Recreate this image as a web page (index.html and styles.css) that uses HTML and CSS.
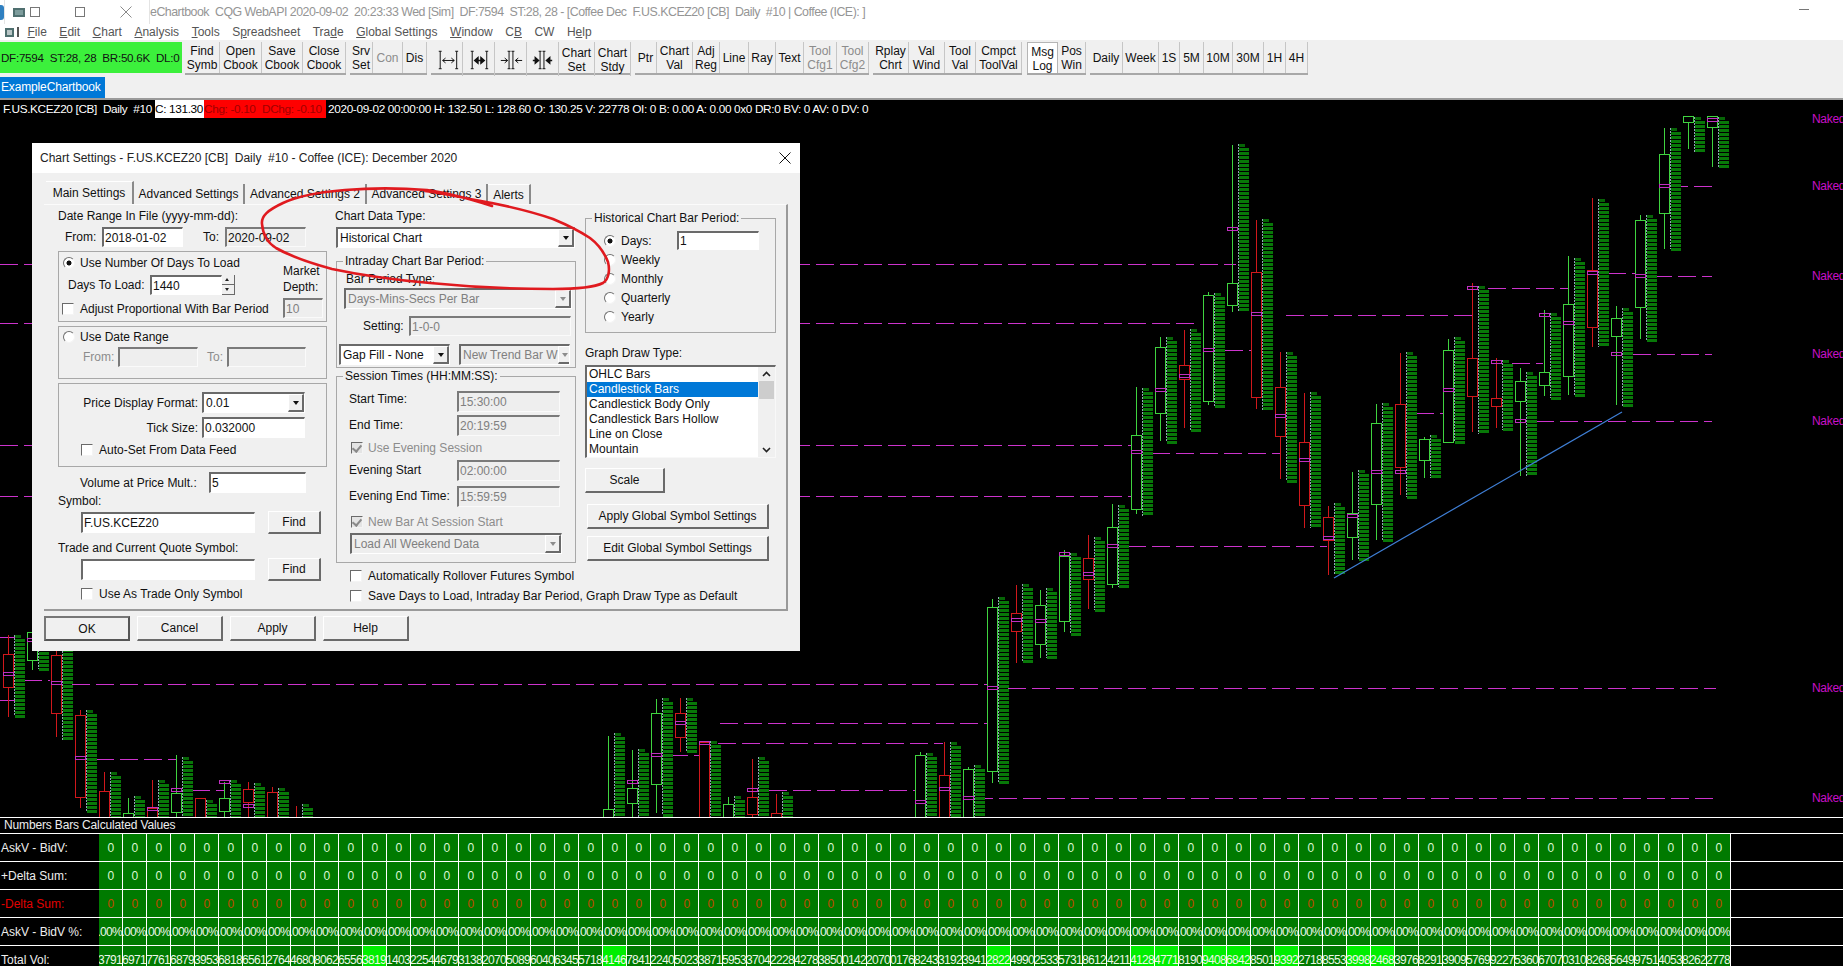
FILE: index.html
```html
<!DOCTYPE html>
<html lang="en">
<head>
  <meta charset="UTF-8" />
  <title>Sierra Chart - ExampleChartbook</title>
  <link rel="stylesheet" href="styles.css">
</head>
<body>
  <div class="titlebar">
    <div class="app-icon"></div>
    <div class="win-controls">
      <span class="mini-icon"></span>
      <span class="restore-glyph"></span>
      <span class="max-glyph"></span>
      <svg class="close-glyph" width="12" height="12" viewBox="0 0 12 12"><path d="M0.5 0.5L11.5 11.5M11.5 0.5L0.5 11.5" stroke="#8a8a8a" fill="none"/></svg>
    </div>
    <div class="title-text">eChartbook  CQG WebAPI 2020-09-02  20:23:33 Wed [Sim]  DF:7594  ST:28, 28 - [Coffee Dec  F.US.KCEZ20 [CB]  Daily  #10 | Coffee (ICE): ]</div>
    <span class="min-glyph"></span>
  </div>

  <div class="menubar">
    <svg class="menu-icon" width="16" height="11" viewBox="0 0 16 11"><rect x="0" y="1" width="9" height="9" fill="#4f6f6f"/><rect x="2" y="3" width="5" height="5" fill="#b9c6c6"/><rect x="12" y="0" width="2" height="10" fill="#555"/></svg>
    <span class="menu-item"><u>F</u>ile</span>
    <span class="menu-item"><u>E</u>dit</span>
    <span class="menu-item"><u>C</u>hart</span>
    <span class="menu-item"><u>A</u>nalysis</span>
    <span class="menu-item"><u>T</u>ools</span>
    <span class="menu-item">S<u>p</u>readsheet</span>
    <span class="menu-item">Tra<u>d</u>e</span>
    <span class="menu-item"><u>G</u>lobal Settings</span>
    <span class="menu-item"><u>W</u>indow</span>
    <span class="menu-item">C<u>B</u></span>
    <span class="menu-item">CW</span>
    <span class="menu-item">H<u>e</u>lp</span>
  </div>

  <div class="toolbar">
    <div class="status-box">DF:7594  ST:28, 28  BR:50.6K  DL:0</div>
    <div class="tool-group tg-file">
      <div class="tool">Find<br>Symb</div><div class="tool">Open<br>Cbook</div><div class="tool">Save<br>Cbook</div><div class="tool">Close<br>Cbook</div>
    </div>
    <div class="tool-group tg-server">
      <div class="tool">Srv<br>Set</div><div class="tool off">Con</div><div class="tool">Dis</div>
    </div>
    <div class="tool-group tg-chart">
      <div class="tool">
        <svg width="32" height="33" viewBox="0 0 32 33"><path d="M9.5 8V26M26.5 8V26M8 8H11M8 26H11M25 8H28M25 26H28M12 17.5H24M12 17.5L15 15M12 17.5L15 20M24 17.5L21 15M24 17.5L21 20" stroke="#111" fill="none"/></svg>
      </div>
      <div class="tool">
        <svg width="32" height="33" viewBox="0 0 32 33"><path d="M9.5 8V26M24.5 8V26M8 8H11M8 26H11M23 8H26M23 26H26" stroke="#111" fill="none"/><path d="M12 17.5H22M12 17.5L15.5 14.5V20.5ZM22 17.5L18.5 14.5V20.5Z" stroke="#111" stroke-width="1.4" fill="#111"/></svg>
      </div>
      <div class="tool">
        <svg width="32" height="33" viewBox="0 0 32 33"><path d="M14.5 8V26M18.5 8V26M13 8H16M13 26H16M17 8H20M17 26H20M6 17.5H13M13 17.5L10 15M13 17.5L10 20M28 17.5H21M21 17.5L24 15M21 17.5L24 20" stroke="#111" fill="none"/></svg>
      </div>
      <div class="tool">
        <svg width="32" height="33" viewBox="0 0 32 33"><path d="M13.5 8V26M17.5 8V26M12 8H15M12 26H15M16 8H19M16 26H19" stroke="#111" fill="none"/><path d="M6 17.5H12M12 17.5L8.5 14.5V20.5ZM26 17.5H20M20 17.5L23.5 14.5V20.5Z" stroke="#111" stroke-width="1.4" fill="#111"/></svg>
      </div>
      <div class="tool">Chart<br>Set</div><div class="tool">Chart<br>Stdy</div>
    </div>
    <div class="tool-group tg-draw">
      <div class="tool">Ptr</div><div class="tool">Chart<br>Val</div><div class="tool">Adj<br>Reg</div><div class="tool">Line</div><div class="tool">Ray</div><div class="tool">Text</div><div class="tool off">Tool<br>Cfg1</div><div class="tool off">Tool<br>Cfg2</div>
    </div>
    <div class="tool-group tg-replay">
      <div class="tool">Rplay<br>Chrt</div><div class="tool">Val<br>Wind</div><div class="tool">Tool<br>Val</div><div class="tool">Cmpct<br>ToolVal</div>
    </div>
    <div class="tool-group tg-log">
      <div class="tool pressed">Msg<br>Log</div><div class="tool">Pos<br>Win</div>
    </div>
    <div class="tool-group tg-period">
      <div class="tool">Daily</div><div class="tool">Week</div><div class="tool">1S</div><div class="tool">5M</div><div class="tool">10M</div><div class="tool">30M</div><div class="tool">1H</div><div class="tool">4H</div>
    </div>
  </div>

  <div class="tabstrip"><span class="book-tab">ExampleChartbook</span></div>

  <div class="chart-header">
    <span class="hdr-name">F.US.KCEZ20 [CB]  Daily  #10</span><span class="hdr-close">C: 131.30</span><span class="hdr-chg">Chg: -0.10</span><span class="hdr-dchg">DChg: -0.10</span><span class="hdr-rest">2020-09-02 00:00:00 H: 132.50 L: 128.60 O: 130.25 V: 22778 OI: 0 B: 0.00 A: 0.00 0x0 DR:0 BV: 0 AV: 0 DV: 0</span>
  </div>

  <div class="chart-area">
    <svg id="chart" class="chart-svg" width="1843" height="699" viewBox="0 118 1843 699"></svg>

    <div class="dialog">
      <div class="dlg-title">
        <span class="dlg-caption">Chart Settings - F.US.KCEZ20 [CB]  Daily  #10 - Coffee (ICE): December 2020</span>
        <svg width="12" height="12" viewBox="0 0 12 12"><path d="M0.5 0.5L11.5 11.5M11.5 0.5L0.5 11.5" stroke="#111" fill="none"/></svg>
      </div>

      <div class="dlg-tabs">
        <span class="dlg-tab active">Main Settings</span>
        <span class="dlg-tab t2">Advanced Settings</span>
        <span class="dlg-tab t3">Advanced Settings 2</span>
        <span class="dlg-tab t4">Advanced Settings 3</span>
        <span class="dlg-tab t5">Alerts</span>
      </div>

      <div class="pane">
        <!-- left column -->
        <div class="col">
          <div class="label-row">Date Range In File (yyyy-mm-dd):</div>
          <div class="row r20 mt1">
            <span class="lb-from">From:</span><input class="field w81" value="2018-01-02">
            <span class="lb-to">To:</span><input class="field w81 readonly" value="2020-09-02">
          </div>

          <div class="box box-days">
            <div class="days-main">
              <div class="row r22 ind4"><span class="radio on"></span><span>Use Number Of Days To Load</span></div>
              <div class="row r20 mt1">
                <span class="lb-days">Days To Load:</span><input class="field w72" value="1440"><span class="spin"><i class="up"></i><i class="down"></i></span>
              </div>
              <div class="row r25 ind3 pt2"><span class="check"></span><span>Adjust Proportional With Bar Period</span></div>
            </div>
            <div class="depth">
              <div class="depth-label">Market<br>Depth:</div>
              <input class="field w40 dis" value="10">
            </div>
          </div>

          <div class="box box-range">
            <div class="row r20 ind4"><span class="radio"></span><span>Use Date Range</span></div>
            <div class="row r20">
              <span class="lb-from2 gray">From:</span><input class="field w80 dis">
              <span class="lb-to2 gray">To:</span><input class="field w79 dis">
            </div>
          </div>

          <div class="box box-price">
            <div class="row r21 mt8"><span class="lb-right">Price Display Format:</span><div class="combo w103"><span>0.01</span><b class="arrow"></b></div></div>
            <div class="row r21 mt4"><span class="lb-right">Tick Size:</span><input class="field w103" value="0.032000"></div>
            <div class="row r20 mt2 ind22"><span class="check"></span><span>Auto-Set From Data Feed</span></div>
          </div>

          <div class="row r21 mt5"><span class="lb-mult">Volume at Price Mult.:</span><input class="field w97" value="5"></div>
          <div class="label-sm">Symbol:</div>
          <div class="row r21 mt3 ind23"><input class="field w174" value="F.US.KCEZ20"><button class="btn btn-find">Find</button></div>
          <div class="label-sm mt7">Trade and Current Quote Symbol:</div>
          <div class="row r21 mt3 ind23"><input class="field w174"><button class="btn btn-find">Find</button></div>
          <div class="row r20 mt4 ind23"><span class="check"></span><span>Use As Trade Only Symbol</span></div>
        </div>

        <!-- middle column -->
        <div class="col">
          <div class="label-row">Chart Data Type:</div>
          <div class="combo w239 mt1 ml1 h20"><span>Historical Chart</span><b class="arrow"></b></div>

          <fieldset class="group group-intraday">
            <legend>Intraday Chart Bar Period:</legend>
            <div class="label-sm mt2 ind9">Bar Period Type:</div>
            <div class="combo dis w228 h20 mt1 ml7"><span>Days-Mins-Secs Per Bar</span><b class="arrow"></b></div>
            <div class="row r20 mt7"><span class="lb-setting">Setting:</span><input class="field w162 dis" value="1-0-0"></div>
            <div class="row r21 mt8">
              <div class="combo w111 ml2"><span>Gap Fill - None</span><b class="arrow"></b></div>
              <div class="combo dis w111 ml9"><span>New Trend Bar W</span><b class="arrow"></b></div>
            </div>
          </fieldset>

          <fieldset class="group group-session">
            <legend>Session Times (HH:MM:SS):</legend>
            <div class="row r21 mt7"><span class="lb-time lb-up">Start Time:</span><input class="field w103 dis" value="15:30:00"></div>
            <div class="row r22 mt2"><span class="lb-time">End Time:</span><input class="field w103 dis" value="20:19:59"></div>
            <div class="row r20 mt2 ind14 gray"><span class="check mark dis"></span><span>Use Evening Session</span></div>
            <div class="row r22 mt1"><span class="lb-time">Evening Start</span><input class="field w103 dis" value="02:00:00"></div>
            <div class="row r22 mt4"><span class="lb-time">Evening End Time:</span><input class="field w103 dis" value="15:59:59"></div>
            <div class="row r20 mt5 ind14 gray"><span class="check mark dis"></span><span>New Bar At Session Start</span></div>
            <div class="combo dis w212 h21 mt1 ml13"><span>Load All Weekend Data</span><b class="arrow"></b></div>
          </fieldset>

          <div class="row r20 mt3 ind15"><span class="check"></span><span>Automatically Rollover Futures Symbol</span></div>
          <div class="row r19 ind15"><span class="check"></span><span class="nowrap">Save Days to Load, Intraday Bar Period, Graph Draw Type as Default</span></div>
        </div>

        <!-- right column -->
        <div class="col">
          <fieldset class="group group-hist">
            <legend>Historical Chart Bar Period:</legend>
            <div class="hist-list">
              <div class="row r19"><span class="radio on"></span><span class="lb-days-radio">Days:</span><input class="field w82" value="1"></div>
              <div class="row r19"><span class="radio"></span><span>Weekly</span></div>
              <div class="row r19"><span class="radio"></span><span>Monthly</span></div>
              <div class="row r19"><span class="radio"></span><span>Quarterly</span></div>
              <div class="row r19"><span class="radio"></span><span>Yearly</span></div>
            </div>
          </fieldset>
          <div class="label-sm mt12">Graph Draw Type:</div>
          <div class="listbox">
            <div class="list-items">
              <div class="list-item">OHLC Bars</div>
              <div class="list-item sel">Candlestick Bars</div>
              <div class="list-item">Candlestick Body Only</div>
              <div class="list-item">Candlestick Bars Hollow</div>
              <div class="list-item">Line on Close</div>
              <div class="list-item">Mountain</div>
            </div>
            <div class="scroll">
              <svg width="17" height="14" viewBox="0 0 17 14"><path d="M5 9L8.5 5.5L12 9" stroke="#222" stroke-width="1.6" fill="none"/></svg>
              <span class="thumb"></span>
              <svg class="scroll-down" width="17" height="14" viewBox="0 0 17 14"><path d="M5 5L8.5 8.5L12 5" stroke="#222" stroke-width="1.6" fill="none"/></svg>
            </div>
          </div>
          <button class="btn btn-scale">Scale</button>
          <button class="btn btn-global mt11">Apply Global Symbol Settings</button>
          <button class="btn btn-global mt7">Edit Global Symbol Settings</button>
        </div>
      </div>

      <div class="dlg-buttons">
        <button class="btn btn-dlg default">OK</button>
        <button class="btn btn-dlg">Cancel</button>
        <button class="btn btn-dlg">Apply</button>
        <button class="btn btn-dlg">Help</button>
      </div>

      <!-- hand drawn circle on top of the dialog -->
      <svg class="scribble" width="768" height="508" viewBox="32 143 768 508">
        <path d="M492 206C470 199 450 193 427 190C400 188 370 188 345 190C320 192 298 196 283 203C268 210 261 216 262 224C263 236 268 243 276 248C290 256 310 263 332 269C365 276 395 280 430 283C470 287 515 289 553 289C575 289 595 287 603 283C609 279 610 270 608 262C604 252 598 244 590 238C578 230 565 224 553 219C530 211 505 205 470 199C455 196 440 193 425 191" stroke="#e01a1f" stroke-width="2.6" fill="none" stroke-linecap="round"/>
      </svg>
    </div>
  </div>

  <div class="numbers-panel">
    <div class="panel-title">Numbers Bars Calculated Values</div>
    <div id="numbers"></div>
  </div>

  <script src="chart.js"></script>
</body>
</html>
```

FILE: styles.css
```css
* {
  box-sizing: border-box;
}

html, body {
  margin: 0;
  padding: 0;
}

body {
  width: 1843px;
  height: 966px;
  overflow: hidden;
  background: #000;
  font-family: "Liberation Sans", Arial, sans-serif;
  font-size: 12px;
  color: #111;
}

/* window chrome */
.titlebar {
  height: 24px;
  background: #fff;
  display: flex;
  align-items: center;
}

.app-icon {
  width: 4px;
  height: 15px;
  background: #2f7fc0;
  border-radius: 0 3px 3px 0;
}

.win-controls {
  width: 146px;
  height: 24px;
  border-right: 1px solid #e4e4e4;
  border-left: 1px solid #e4e4e4;
  display: flex;
  align-items: center;
  padding-left: 8px;
  flex: none;
}

.mini-icon {
  width: 12px;
  height: 9px;
  background: #7d9c9c;
  border: 2px solid #4f6f6f;
}

.restore-glyph {
  width: 10px;
  height: 10px;
  border: 1px solid #777;
  margin-left: 5px;
}

.max-glyph {
  width: 10px;
  height: 10px;
  border: 1px solid #777;
  margin-left: 35px;
}

.close-glyph {
  margin-left: 35px;
}

.title-text {
  color: #959595;
  font-size: 12.4px;
  letter-spacing: -0.5px;
  white-space: pre;
}

.min-glyph {
  width: 10px;
  height: 1px;
  background: #777;
  margin-left: auto;
  margin-right: 34px;
  margin-top: -6px;
}

.menubar {
  height: 16px;
  background: #fff;
  display: flex;
  align-items: center;
  gap: 12.5px;
  padding-left: 5px;
  color: #555;
}

.menu-icon {
  margin-right: -6px;
}

/* toolbar */
.toolbar {
  height: 36px;
  background: #f0f0f0;
  display: flex;
  align-items: flex-start;
  padding-top: 2px;
}

.status-box {
  width: 182px;
  height: 31px;
  background: #3cf03c;
  color: #111;
  line-height: 31px;
  padding-left: 1px;
  margin-right: 3px;
  font-size: 11.6px;
  letter-spacing: -0.25px;
  white-space: pre;
  overflow: hidden;
}

.tool-group {
  display: grid;
  height: 33px;
  margin-right: 4px;
  border-bottom: 2px solid #a8a8a8;
}

.tg-file { grid-template-columns: 35px 42px 41px 43px; }
.tg-server { grid-template-columns: 23px 30px 24px; }
.tg-chart { grid-template-columns: 32px 32px 32px 32px 36px 36px; }
.tg-draw { grid-template-columns: 22px 36px 27px 29px 27px 28px 33px 32px; }
.tg-replay { grid-template-columns: 36px 36px 31px 46px; margin-right: 5px; }
.tg-log { grid-template-columns: 31px 28px; }
.tg-period { grid-template-columns: 33px 36px 21px 24px 29px 31px 22px 22px; }

.tool {
  display: flex;
  align-items: center;
  justify-content: center;
  text-align: center;
  line-height: 14px;
  padding-top: 1px;
  border-right: 1px solid #c6c6c6;
  white-space: nowrap;
}

.tool.off {
  color: #8c8c8c;
}

.tool.pressed {
  background: #fff;
  border: 1px solid #b5b5b5;
  border-bottom: none;
}

.tabstrip {
  height: 22px;
  background: #f0f0f0;
  padding-top: 1px;
}

.book-tab {
  display: inline-block;
  width: 105px;
  height: 21px;
  background: #0078d7;
  color: #fff;
  line-height: 21px;
  padding-left: 1px;
  font-size: 12px;
  letter-spacing: -0.15px;
  vertical-align: top;
}

.chart-header {
  height: 20px;
  border-top: 2px solid #9a9a9a;
  background: #000;
  color: #fff;
  display: flex;
  line-height: 18px;
  padding-left: 3px;
  font-size: 11.8px;
  letter-spacing: -0.35px;
  white-space: pre;
}

.hdr-name {
  width: 152px;
}

.hdr-close {
  width: 49px;
  background: #fff;
  color: #000;
}

.hdr-chg {
  width: 58px;
  background: #ff0000;
  color: #a00000;
}

.hdr-dchg {
  width: 64px;
  background: #ff0000;
  color: #a00000;
  margin-right: 2px;
}

/* chart */
.chart-area {
  position: relative;
  height: 699px;
  background: #000;
}

.chart-svg {
  display: block;
  overflow: visible;
}

/* numbers panel below the chart, it covers the bars that run past the chart bottom */
.numbers-panel {
  position: relative;
  background: #000;
  border-top: 1px solid #fff;
  color: #eee;
  font-size: 12px;
}

.panel-title {
  height: 15px;
  line-height: 15px;
  padding-left: 4px;
  letter-spacing: -0.15px;
}

.num-row {
  height: 28px;
  border-top: 1px solid #fff;
  display: flex;
}

.num-label {
  width: 99px;
  line-height: 28px;
  padding-left: 1px;
}

.num-label.neg {
  color: #e00000;
}

.num-cell {
  width: 24px;
  background: #007a00;
  border-right: 1px solid #fff;
  display: flex;
  justify-content: center;
  line-height: 28px;
  letter-spacing: -0.7px;
  overflow: hidden;
  color: #dcf7d2;
}

.num-cell.neg {
  color: #c04a00;
}

/* long values keep their right end, the left end is clipped */
.num-cell.long {
  justify-content: flex-end;
  color: #eef8ea;
}

.num-cell.hot {
  background: #00ee00;
}

/* dialog */
.dialog {
  position: absolute;
  left: 32px;
  top: 25px;
  width: 768px;
  height: 508px;
  background: #f0f0f0;
  display: flex;
  flex-direction: column;
  padding-left: 12px;
}

.dlg-title {
  height: 30px;
  margin-left: -12px;
  background: #fff;
  display: flex;
  align-items: center;
  justify-content: space-between;
  padding: 0 9px 0 8px;
  color: #222;
}

.dlg-caption {
  white-space: pre;
}

.dlg-tabs {
  height: 31px;
  display: flex;
  align-items: flex-end;
  padding-left: 2px;
}

.dlg-tab {
  height: 20px;
  line-height: 21px;
  border-right: 2px solid #8a8a8a;
  text-align: center;
  white-space: nowrap;
  overflow: hidden;
}

.dlg-tab.active {
  width: 88px;
  height: 23px;
  background: #f0f0f0;
  border-top: 1px solid #fff;
  line-height: 22px;
}

.t2 { width: 111px; }
.t3 { width: 122px; }
.t4 { width: 121px; }
.t5 { width: 43px; border-top: 1px solid #fff; }

.pane {
  width: 744px;
  height: 407px;
  border-right: 2px solid #9a9a9a;
  border-bottom: 2px solid #9a9a9a;
  border-top: 1px solid #fbfbfb;
  padding: 1px 0 0 14px;
  display: grid;
  grid-template-columns: 269px 241px 191px;
  column-gap: 8px;
}

.col {
  display: flex;
  flex-direction: column;
  align-items: flex-start;
}

.col:last-child {
  margin-left: 1px;
}

.label-row {
  height: 20px;
  line-height: 20px;
}

.label-sm {
  height: 16px;
  line-height: 16px;
}

.row {
  display: flex;
  align-items: center;
  flex: none;
}

.r19 { height: 19px; }
.r20 { height: 20px; }
.r21 { height: 21px; }
.r22 { height: 22px; }
.r25 { height: 25px; }

.h20 { height: 20px; }
.h21 { height: 21px; }

.mt1 { margin-top: 1px; }
.mt2 { margin-top: 2px; }
.mt3 { margin-top: 3px; }
.mt4 { margin-top: 4px; }
.mt5 { margin-top: 5px; }
.mt7 { margin-top: 7px; }
.mt8 { margin-top: 8px; }
.mt11 { margin-top: 11px; }
.mt12 { margin-top: 12px; }
.ml1 { margin-left: 1px; }
.ml2 { margin-left: 2px; }
.ml7 { margin-left: 7px; }
.ml9 { margin-left: 9px; }
.ml13 { margin-left: 13px; }
.pt2 { padding-top: 2px; }

.ind3 { padding-left: 3px; }
.ind4 { padding-left: 4px; }
.ind9 { padding-left: 9px; }
.ind14 { padding-left: 14px; }
.ind15 { padding-left: 15px; }
.ind22 { padding-left: 22px; }
.ind23 { padding-left: 23px; }

.w40 { width: 40px; }
.w72 { width: 72px; }
.w79 { width: 79px; }
.w80 { width: 80px; }
.w81 { width: 81px; }
.w82 { width: 82px; }
.w97 { width: 97px; }
.w103 { width: 103px; }
.w111 { width: 111px; }
.w162 { width: 162px; }
.w174 { width: 174px; }
.w212 { width: 212px; }
.w228 { width: 228px; }
.w239 { width: 239px; }

.gray {
  color: #8c8c8c;
}

.nowrap {
  white-space: nowrap;
}

/* win32 style controls */
.field {
  height: 100%;
  max-height: 21px;
  background: #fff;
  border-style: solid;
  border-width: 2px 1px 1px 2px;
  border-color: #6a6a6a #fff #fff #6a6a6a;
  padding: 0 0 0 1px;
  font: inherit;
  color: #111;
  outline: none;
}

.field.dis {
  background: #eeeeee;
  color: #808080;
  border-color: #7a7a7a #fafafa #fafafa #7a7a7a;
}

.field.readonly {
  background: #eeeeee;
  border-color: #7a7a7a #fafafa #fafafa #7a7a7a;
}

.combo {
  display: flex;
  align-items: center;
  justify-content: space-between;
  height: 21px;
  background: #fff;
  border-style: solid;
  border-width: 2px 1px 1px 2px;
  border-color: #6a6a6a #fff #fff #6a6a6a;
  padding-left: 2px;
  white-space: nowrap;
  overflow: hidden;
  flex: none;
}

.combo.dis {
  background: #eeeeee;
  color: #808080;
}

.arrow {
  flex: none;
  width: 16px;
  height: 100%;
  background: #f0f0f0;
  border-right: 2px solid #6a6a6a;
  border-bottom: 2px solid #6a6a6a;
  border-left: 1px solid #fff;
  border-top: 1px solid #fff;
  display: flex;
  align-items: center;
  justify-content: center;
}

.arrow::after {
  content: "";
  border-left: 3.5px solid transparent;
  border-right: 3.5px solid transparent;
  border-top: 4px solid #111;
}

.combo.dis .arrow::after {
  border-top-color: #8c8c8c;
}

.spin {
  width: 13px;
  height: 20px;
  display: flex;
  flex-direction: column;
  flex: none;
  background: #f0f0f0;
}

.spin i {
  flex: 1;
  border-right: 1px solid #6a6a6a;
  border-bottom: 1px solid #6a6a6a;
  position: relative;
}

.spin i::after {
  content: "";
  position: absolute;
  left: 3px;
  top: 3px;
  border-left: 2.5px solid transparent;
  border-right: 2.5px solid transparent;
}

.spin .up::after {
  border-bottom: 3px solid #222;
}

.spin .down::after {
  border-top: 3px solid #222;
}

.radio {
  flex: none;
  width: 12px;
  height: 12px;
  border-radius: 50%;
  background: #fff;
  border: 1px solid;
  border-color: #707070 #f4f4f4 #f4f4f4 #707070;
  margin-right: 5px;
}

.radio.on {
  background: radial-gradient(circle, #111 0 2.2px, #fff 2.8px);
}

.check {
  flex: none;
  width: 12px;
  height: 12px;
  background: #fff;
  border: 1px solid;
  border-color: #6a6a6a #f4f4f4 #f4f4f4 #6a6a6a;
  margin-right: 6px;
  position: relative;
}

.check.dis {
  background: #e4e4e4;
  margin-right: 5px;
}

.check.mark::after {
  content: "";
  position: absolute;
  left: 2px;
  top: 0;
  width: 4px;
  height: 7px;
  border-right: 2px solid #8a8a8a;
  border-bottom: 2px solid #8a8a8a;
  transform: rotate(40deg);
}

.btn {
  font: inherit;
  color: #111;
  background: #f0f0f0;
  border-style: solid;
  border-width: 1px 2px 2px 1px;
  border-color: #fff #6a6a6a #6a6a6a #fff;
  padding: 0;
  flex: none;
}

.btn-find {
  width: 53px;
  height: 23px;
  margin-left: 13px;
}

.btn-scale {
  width: 80px;
  height: 25px;
  margin-top: 10px;
}

.btn-global {
  width: 182px;
  height: 25px;
  margin-left: 2px;
}

.btn-dlg {
  width: 86px;
  height: 25px;
}

.btn-dlg.default {
  border: 2px solid;
  border-color: #777 #555 #555 #777;
}

.box {
  width: 269px;
  margin-top: 4px;
  border: 1px solid #a8a8a8;
  flex: none;
}

.box-days {
  height: 71px;
  display: flex;
}

.days-main {
  width: 224px;
}

.lb-from { width: 44px; padding-left: 7px; }
.lb-to { width: 42px; text-align: right; padding-right: 6px; }
.lb-days { width: 91px; padding-left: 9px; }
.lb-from2 { width: 59px; padding-left: 24px; }
.lb-to2 { width: 29px; padding-left: 9px; }
.lb-right { width: 143px; padding-right: 4px; text-align: right; }
.lb-mult { width: 151px; padding-left: 22px; }
.lb-setting { width: 72px; padding-left: 26px; }
.lb-time { width: 120px; padding-left: 12px; }
.lb-up { padding-bottom: 5px; }
.lb-days-radio { width: 56px; }

.depth {
  padding-top: 11px;
}

.depth-label {
  height: 32px;
  line-height: 16px;
  margin-bottom: 3px;
}

.depth .field {
  height: 20px;
}

.box-range {
  height: 53px;
}

.box-price {
  height: 84px;
}

/* fieldset keeps its legend on the border line */
.group {
  margin: 0;
  padding: 0;
  border: 1px solid #a8a8a8;
  min-width: 0;
}

.group legend {
  margin-left: 6px;
  padding: 0 2px;
  height: 16px;
  line-height: 16px;
}

.group-intraday {
  width: 240px;
  height: 115px;
  margin-top: 5px;
  margin-left: 1px;
}

.group-session {
  width: 240px;
  height: 195px;
  margin-left: 1px;
}

.group-hist {
  width: 191px;
  height: 123px;
  margin-top: 4px;
}

.hist-list {
  padding: 5px 0 0 18px;
}

.listbox {
  width: 191px;
  height: 93px;
  margin-top: 4px;
  background: #fff;
  border-style: solid;
  border-width: 2px 1px 1px 2px;
  border-color: #6a6a6a #f8f8f8 #f8f8f8 #6a6a6a;
  display: flex;
  flex: none;
}

.list-items {
  flex: 1;
}

.list-item {
  height: 15px;
  line-height: 15px;
  padding-left: 2px;
}

.list-item.sel {
  background: #0078d7;
  color: #fff;
}

.scroll {
  width: 17px;
  background: #f0f0f0;
  display: flex;
  flex-direction: column;
}

.thumb {
  width: 15px;
  height: 18px;
  margin-left: 1px;
  background: #cdcdcd;
}

.scroll-down {
  margin-top: auto;
}

.dlg-buttons {
  display: flex;
  gap: 7px;
  margin-top: 5px;
}

.scribble {
  position: absolute;
  left: 0;
  top: 0;
  pointer-events: none;
}
```

FILE: chart.js
```javascript
// bars: i, color, wick top, wick bottom, body top, body bottom, vol top, vol bottom, poc
// x of a bar = 3 + 24 * i, same grid as the numbers table below
var bars = [
  [0, 'r', 635, 717, 654, 687, 635, 716, 674],
  [1, 'g', 630, 670, 632, 660, 632, 669, 640],
  [2, 'r', 650, 737, 655, 713, 645, 740, 683],
  [3, 'r', 710, 808, 715, 797, 710, 811, 758],
  [4, 'r', 772, 830, 791, 830, 772, 830, 0],
  [5, 'g', 798, 830, 813, 830, 796, 830, 0],
  [6, 'r', 780, 830, 808, 830, 780, 830, 809],
  [7, 'g', 755, 830, 793, 812, 757, 830, 790],
  [8, 'r', 798, 830, 798, 830, 800, 830, 0],
  [9, 'g', 782, 830, 798, 811, 780, 830, 782],
  [10, 'r', 782, 830, 789, 802, 783, 830, 806],
  [11, 'r', 787, 830, 792, 830, 788, 830, 0],
  [12, 'r', 806, 830, 0, 0, 804, 830, 0],
  [25, 'g', 736, 830, 809, 830, 733, 830, 0],
  [26, 'g', 750, 830, 788, 803, 749, 830, 782],
  [27, 'g', 699, 813, 713, 784, 698, 815, 755],
  [28, 'r', 698, 752, 713, 737, 698, 752, 723],
  [29, 'r', 741, 830, 742, 830, 741, 830, 743],
  [30, 'g', 797, 830, 804, 830, 796, 830, 0],
  [31, 'r', 759, 830, 797, 814, 757, 830, 790],
  [32, 'r', 794, 830, 813, 830, 792, 830, 0],
  [38, 'g', 752, 830, 755, 830, 753, 830, 802],
  [39, 'r', 742, 830, 775, 830, 742, 830, 789],
  [40, 'g', 767, 830, 769, 830, 765, 830, 798],
  [41, 'g', 599, 783, 607, 771, 597, 783, 688],
  [42, 'r', 585, 663, 613, 631, 584, 662, 620],
  [43, 'g', 590, 658, 605, 644, 588, 658, 621],
  [44, 'g', 550, 632, 556, 621, 553, 634, 554],
  [45, 'r', 535, 609, 558, 579, 537, 610, 574],
  [46, 'g', 504, 588, 527, 584, 505, 587, 546],
  [47, 'g', 387, 514, 435, 509, 388, 516, 452],
  [48, 'g', 337, 441, 347, 413, 337, 442, 390],
  [49, 'r', 330, 428, 365, 379, 329, 430, 376],
  [50, 'g', 292, 405, 295, 401, 293, 406, 350],
  [51, 'g', 145, 312, 283, 305, 144, 312, 229],
  [52, 'r', 220, 409, 272, 397, 219, 410, 314],
  [53, 'r', 352, 479, 387, 436, 352, 481, 416],
  [54, 'r', 393, 528, 442, 505, 392, 528, 460],
  [55, 'r', 506, 575, 517, 540, 503, 575, 538],
  [56, 'g', 472, 560, 513, 537, 470, 559, 516],
  [57, 'g', 404, 540, 423, 504, 403, 540, 472],
  [58, 'r', 353, 495, 404, 467, 352, 497, 472],
  [59, 'g', 437, 478, 439, 460, 435, 478, 0],
  [60, 'g', 339, 442, 350, 442, 337, 442, 390],
  [61, 'r', 283, 432, 358, 396, 286, 434, 288],
  [62, 'r', 358, 428, 398, 406, 360, 430, 362],
  [63, 'g', 368, 476, 381, 401, 372, 476, 421],
  [64, 'g', 310, 396, 372, 385, 313, 398, 315],
  [65, 'g', 256, 395, 304, 376, 258, 395, 323],
  [66, 'r', 198, 347, 270, 327, 199, 347, 273],
  [67, 'g', 306, 405, 318, 336, 308, 406, 354],
  [68, 'g', 215, 339, 220, 307, 215, 340, 276],
  [69, 'g', 128, 249, 154, 213, 128, 249, 186],
  [70, 'g', 116, 149, 116, 122, 117, 152, 0],
  [71, 'g', 116, 167, 116, 127, 117, 168, 120]
];

// naked poc lines: y, from x, to x
var nakedLines = [
  [264, 0, 1236], [323, 0, 1200], [445, 0, 1131], [496, 0, 1131],
  [186, 1670, 1712], [276, 1654, 1712], [273, 1608, 1642], [288, 1488, 1568],
  [315, 1286, 1472], [354, 1633, 1712], [421, 1536, 1712], [363, 1512, 1543],
  [453, 1152, 1280], [546, 1128, 1327], [413, 1416, 1448], [350, 1225, 1256],
  [688, 1008, 1716], [684, 72, 990], [723, 720, 990], [743, 718, 943],
  [790, 769, 915], [798, 975, 1716], [759, 96, 176], [790, 192, 224],
  [755, 670, 715], [637, 0, 18], [680, 24, 50], [700, 0, 15]
];

var nakedLabels = [119, 186, 276, 354, 421, 688, 798];

var COLORS = { g: '#3fd33f', r: '#d0181c' };
var SVG_NS = 'http://www.w3.org/2000/svg';
var chart = document.getElementById('chart');

function add(tag, attrs, text) {
  var el = document.createElementNS(SVG_NS, tag);
  for (var k in attrs) el.setAttribute(k, attrs[k]);
  if (text) el.textContent = text;
  chart.appendChild(el);
}

function drawChart() {
  nakedLines.forEach(function (l) {
    add('line', {
      x1: l[1], x2: l[2], y1: l[0] + 0.5, y2: l[0] + 0.5,
      stroke: '#cc33cc', 'stroke-dasharray': '18 6', 'shape-rendering': 'crispEdges'
    });
  });

  bars.forEach(function (b) {
    var x = 3 + 24 * b[0];
    var col = COLORS[b[1]];
    // volume stack
    for (var y = b[6]; y < b[7]; y += 4) {
      var top = y === b[6];
      add('rect', {
        x: x + 12, y: y, width: top ? 6 : 10, height: 3,
        fill: top ? '#066406' : '#087808', 'shape-rendering': 'crispEdges'
      });
    }
    add('line', {
      x1: x + 11.5, x2: x + 11.5, y1: b[6], y2: b[7],
      stroke: '#8fa6b4', 'stroke-dasharray': '2 1', 'shape-rendering': 'crispEdges'
    });
    add('line', {
      x1: x + 5.5, x2: x + 5.5, y1: b[2], y2: b[3],
      stroke: col, 'shape-rendering': 'crispEdges'
    });
    if (b[4]) {
      add('rect', {
        x: x + 0.5, y: b[4] + 0.5, width: 10, height: b[5] - b[4],
        fill: '#000', stroke: col, 'shape-rendering': 'crispEdges'
      });
    }
    if (b[8]) {
      add('rect', {
        x: x + 0.5, y: b[8] - 1.5, width: 10, height: 3,
        fill: 'none', stroke: '#c030c0', 'shape-rendering': 'crispEdges'
      });
    }
  });

  // trend line
  add('line', { x1: 1334, y1: 578, x2: 1622, y2: 412, stroke: '#3f7fd6', 'stroke-width': 1.2 });

  nakedLabels.forEach(function (y) {
    add('text', {
      x: 1812, y: y + 4, fill: '#c810c8', 'letter-spacing': '-0.3',
      'font-family': '"Liberation Sans", Arial, sans-serif', 'font-size': 12
    }, 'Naked POC');
  });
}

var totals = ('23791 16971 17761 16879 13953 16818 26561 12764 14680 28062 26556 63819 21403 12254 24679 13138 ' +
  '12070 15089 16040 16345 15718 84146 17841 12240 15023 13871 15953 13704 12228 14278 13850 10142 ' +
  '12070 10176 18243 13192 13941 62822 14990 12533 15731 18612 14211 64128 64771 18190 69408 66842 ' +
  '18501 69392 12718 18553 63998 82468 13976 18291 13909 15769 19227 15360 16707 10310 18268 15649 ' +
  '19751 14053 18262 22778').split(' ');

var HOT = [11, 21, 37, 43, 44, 46, 47, 49, 52, 53];

function drawNumbers() {
  var rows = [
    ['AskV - BidV:', '0', ''],
    ['+Delta Sum:', '0', ''],
    ['-Delta Sum:', '0', 'neg'],
    ['AskV - BidV %:', '100.00%', 'long'],
    ['Total Vol:', null, 'long']
  ];
  var html = '';
  rows.forEach(function (r) {
    var labelClass = r[2] === 'neg' ? 'neg' : '';
    html += '<div class="num-row"><div class="num-label ' + labelClass + '">' + r[0] + '</div>';
    for (var i = 0; i < 68; i++) {
      var hot = r[1] === null && HOT.indexOf(i) >= 0 ? ' hot' : '';
      html += '<div class="num-cell ' + r[2] + hot + '">' + (r[1] === null ? totals[i] : r[1]) + '</div>';
    }
    html += '</div>';
  });
  document.getElementById('numbers').innerHTML = html;
}

drawChart();
drawNumbers();
```
